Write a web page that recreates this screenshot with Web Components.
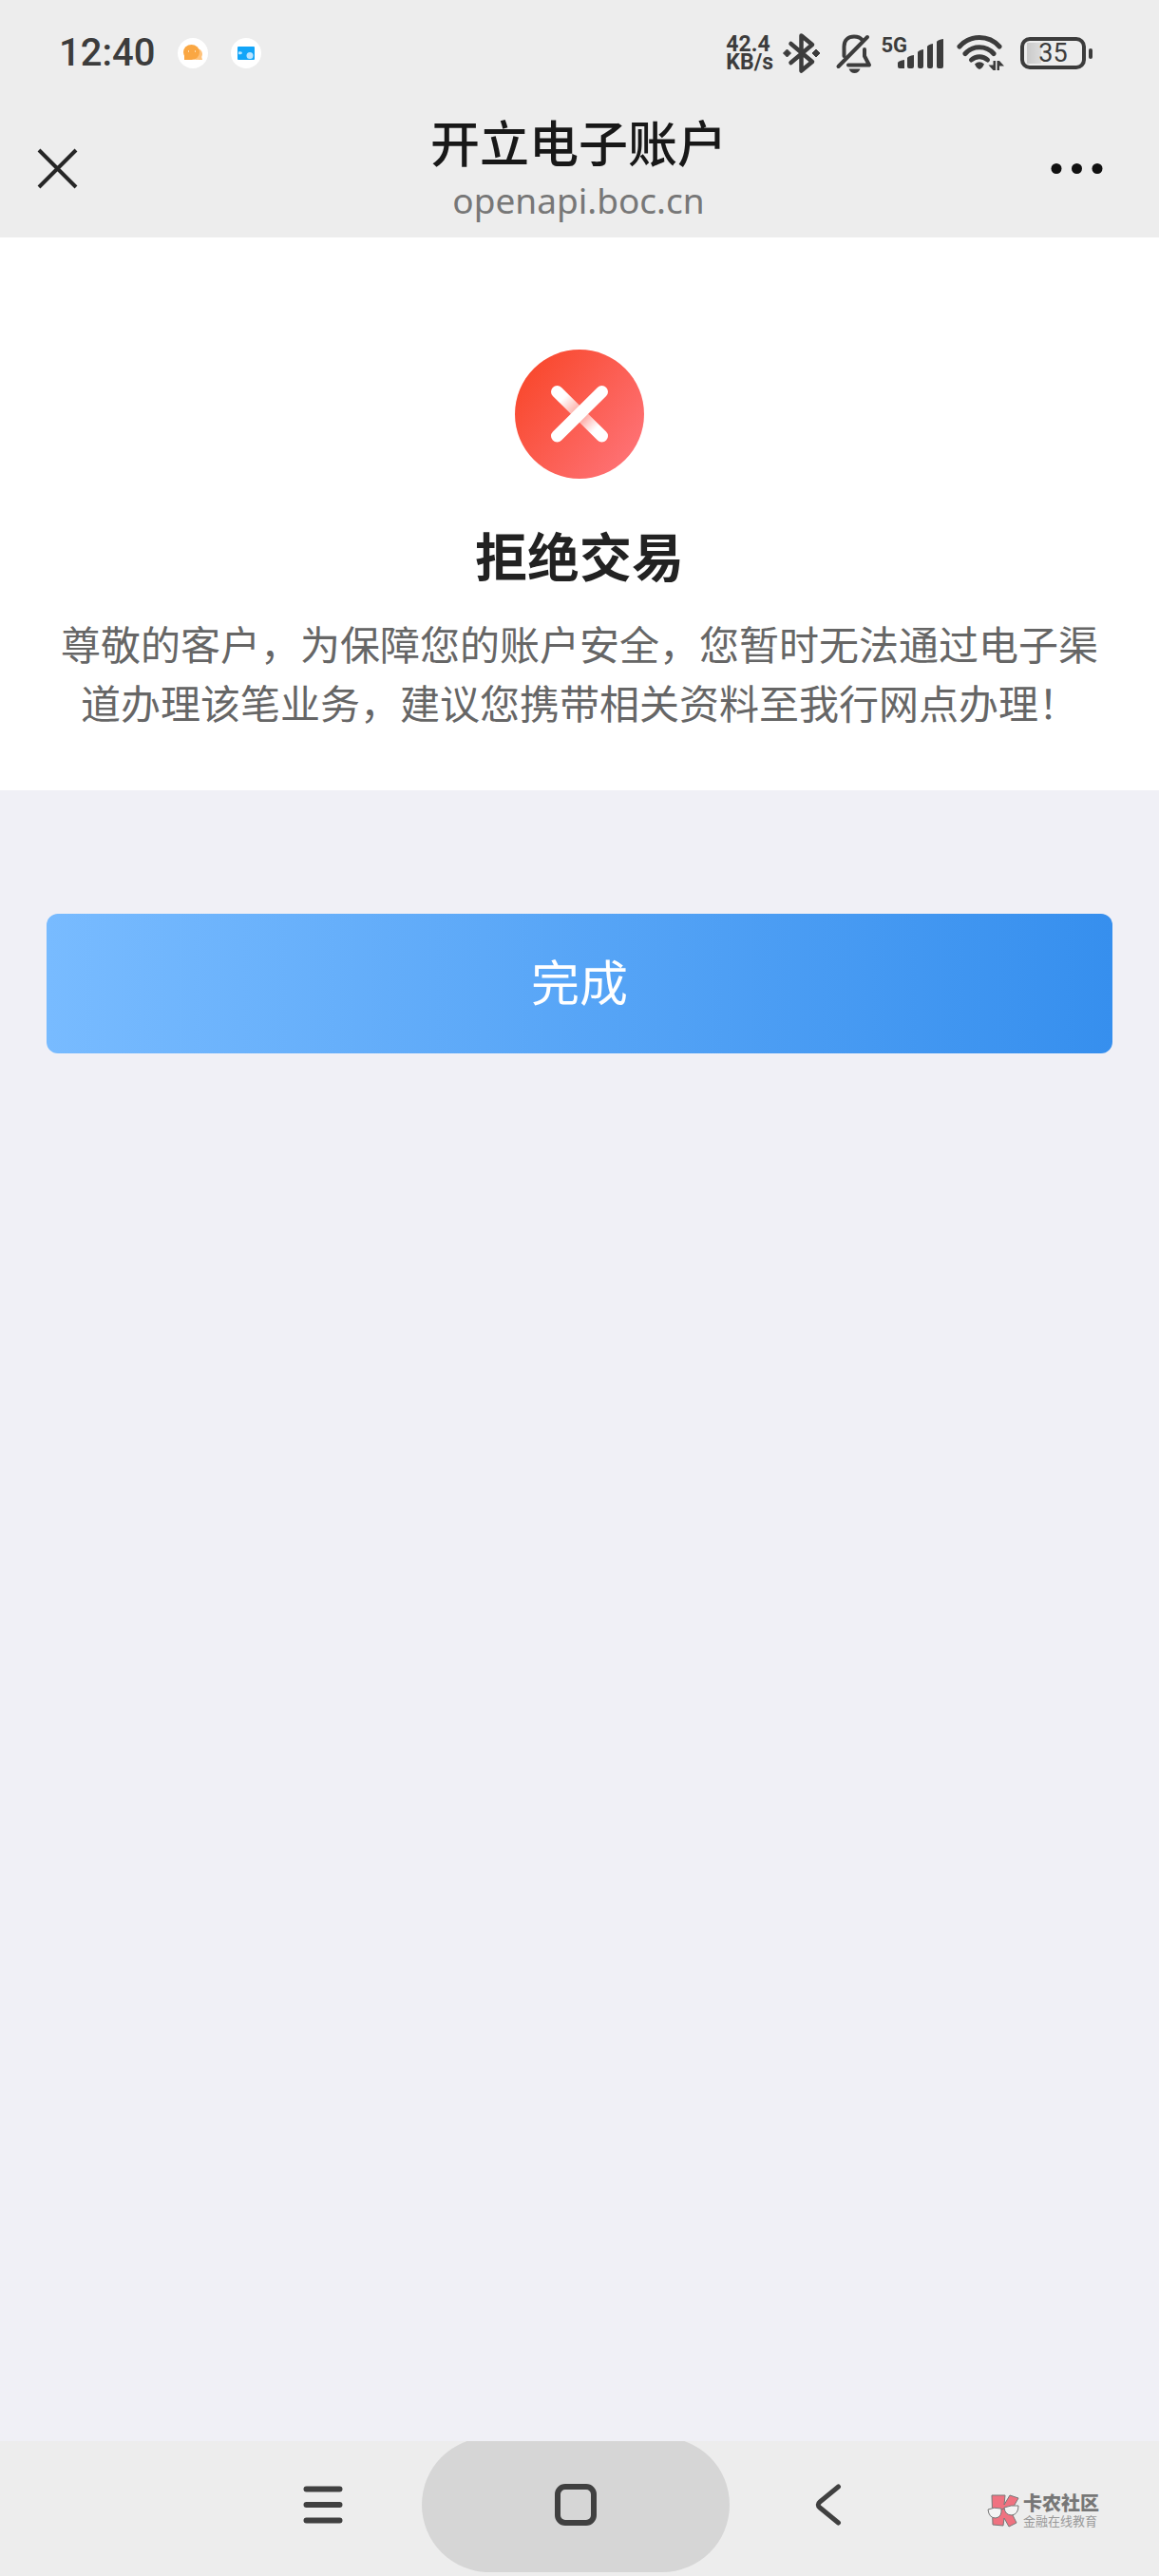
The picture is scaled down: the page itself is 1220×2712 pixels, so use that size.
<!DOCTYPE html>
<html lang="zh-CN">
<head>
<meta charset="utf-8">
<meta name="viewport" content="width=device-width, initial-scale=1">
<title>开立电子账户</title>
<style>
  body {
    margin: 0;
    background: #f0f0f6;
    font-family: "Noto Sans CJK SC", sans-serif;
  }
</style>
</head>
<body>
<account-page>
  <status-bar slot="top" time="12:40" speed="42.4" unit="KB/s" network="5G" battery="35"></status-bar>
  <title-bar slot="top">
    开立电子账户
    <span slot="host">openapi.boc.cn</span>
  </title-bar>
  <result-panel>
    <span slot="title">拒绝交易</span>
    尊敬的客户，为保障您的账户安全，您暂时无法通过电子渠道办理该笔业务，建议您携带相关资料至我行网点办理！
  </result-panel>
  <primary-button>完成</primary-button>
  <system-nav slot="bottom">
    <brand-mark>
      卡农社区
      <span slot="tagline">金融在线教育</span>
    </brand-mark>
  </system-nav>
</account-page>

<script>
class AccountPage extends HTMLElement {
  constructor() {
    super();
    this.attachShadow({ mode: "open" });
    this.shadowRoot.innerHTML = `
      <style>
        :host {
          display: flex;
          flex-direction: column;
          min-height: 100vh;
        }

        header {
          background: #ededed;
        }

        main {
          flex: 1;
        }
      </style>
      <header><slot name="top"></slot></header>
      <main><slot></slot></main>
      <slot name="bottom"></slot>
    `;
  }
}

class StatusBar extends HTMLElement {
  constructor() {
    super();
    this.attachShadow({ mode: "open" });
  }

  connectedCallback() {
    this.shadowRoot.innerHTML = `
      <style>
        :host {
          display: flex;
          align-items: center;
          justify-content: space-between;
          height: 112px;
          padding: 0 70px 0 62px;
          color: #3c3c3c;
          font-family: Roboto, sans-serif;
        }

        .side {
          display: flex;
          align-items: center;
        }

        svg {
          display: block;
        }

        .time {
          margin-right: 24px;
          font-size: 40px;
          line-height: 48px;
          font-weight: 500;
        }

        .app {
          margin-right: 24px;
        }

        .speed {
          display: flex;
          flex-direction: column;
          margin-right: 10px;
          font-size: 23px;
          line-height: 19px;
          font-weight: 700;
        }

        .signal {
          position: relative;
          margin: 0 13px 0 26px;
        }

        .network {
          position: absolute;
          right: 38px;
          top: -4px;
          font-size: 22px;
          line-height: 22px;
          font-weight: 700;
        }

        .bell {
          margin-left: 15px;
        }

        .battery {
          display: flex;
          align-items: center;
          gap: 3px;
          margin-left: 16px;
        }

        .cell {
          box-sizing: border-box;
          width: 69px;
          height: 34px;
          border: 4px solid #3c3c3c;
          border-radius: 10px;
          padding: 2px;
          font-size: 27px;
          line-height: 22px;
          text-align: center;
          background: linear-gradient(90deg, #cacaca, #dcdcdc) 3px 2px / 15px 22px no-repeat;
        }

        .tip {
          width: 4px;
          height: 11px;
          border-radius: 2px;
          background: #3c3c3c;
        }
      </style>
      <div class="side">
        <span class="time">${this.getAttribute("time")}</span>
        <svg class="app" width="32" height="32" viewBox="0 0 32 32">
          <circle cx="16" cy="16" r="16" fill="#fff"/>
          <ellipse cx="20" cy="17" rx="6" ry="6" fill="#ffc27a"/>
          <path d="M21 23 h5 l-1 -4z" fill="#ffc27a"/>
          <ellipse cx="14.500" cy="15" rx="8.500" ry="8" fill="#faa743"/>
          <path d="M7 23 V18 L15 23z" fill="#faa743"/>
          <path d="M11 14h1M18 14h1" stroke="#ffd9a6" stroke-width="2"/>
        </svg>
        <svg class="app" width="32" height="32" viewBox="0 0 32 32">
          <circle cx="16" cy="16" r="16" fill="#fff"/>
          <rect x="7" y="9" width="18" height="14" rx="1" fill="#12a5f8"/>
          <circle cx="20" cy="18.500" r="3.500" fill="#b9e4ff"/>
          <path d="M8 14.500 q4 -1 4 1.500 q-1 2 -4 1z" fill="#b9e4ff"/>
        </svg>
      </div>
      <div class="side">
        <div class="speed">
          <span>${this.getAttribute("speed")}</span>
          <span>${this.getAttribute("unit")}</span>
        </div>
        <svg width="40" height="44" viewBox="0 0 40 44" role="img" aria-label="蓝牙">
          <path d="M8.500 12 L31 31 L19.500 40.500 V3.500 L31 13 L8.500 32" fill="none" stroke="#3c3c3c" stroke-width="4.500" stroke-linecap="round" stroke-linejoin="round"/>
          <path d="M4.500 18 l4 4 l-4 4 l-4 -4z M35 18 l4 4 l-4 4 l-4 -4z" fill="#3c3c3c" stroke="#3c3c3c" stroke-linejoin="round"/>
        </svg>
        <svg class="bell" width="40" height="43" viewBox="0 0 40 43" role="img" aria-label="静音">
          <g fill="none" stroke="#3c3c3c" stroke-width="4" stroke-linecap="round" stroke-linejoin="round">
            <path d="M9.500 24 V14 C9.500 7 14 3.500 20 3.500 C24 3.500 27 5 28.500 7"/>
            <path d="M3.500 35 L34 4"/>
            <path d="M31 17 V24 L36 33.500 H14"/>
          </g>
          <path d="M14.500 37.500 h12 q-2 4.500 -6 4.500 t-6 -4.500z" fill="#3c3c3c"/>
        </svg>
        <div class="signal">
          <span class="network">${this.getAttribute("network")}</span>
          <svg width="48" height="31" viewBox="0 0 48 31" role="img" aria-label="信号">
            <path d="M0 25 q1 -2 7 -3 v9 h-5 q-2 0 -2 -2z M10 20 q1 -2 7 -3 v12 q0 2 -2 2 h-3 q-2 0 -2 -2z M21 14 q1 -2 6 -3 v18 q0 2 -2 2 h-2 q-2 0 -2 -2z M31 8 q1 -2 6 -3 v24 q0 2 -2 2 h-2 q-2 0 -2 -2z M41 3 q1 -2 7 -3 v29 q0 2 -2 2 h-3 q-2 0 -2 -2z" fill="#3c3c3c"/>
          </svg>
        </div>
        <svg width="52" height="40" viewBox="0 0 52 40" role="img" aria-label="无线网络">
          <g fill="none" stroke="#3c3c3c" stroke-width="5" stroke-linecap="round">
            <path d="M4 13 A28 28 0 0 1 46 13"/>
            <path d="M10 20.500 A20 20 0 0 1 40 20.500"/>
            <path d="M16.500 27 A12.500 12.500 0 0 1 33.500 27"/>
          </g>
          <path d="M20 31.500 Q25 27 30 31.500 Q28 36 25 37 Q22 36 20 31.500z" fill="#3c3c3c"/>
          <path d="M39.500 28 h2.500 v10 h-2.500 l-5 -5.500 h5z M46 38 h-2.500 v-10 h2.500 l5 5.500 h-5z" fill="#3c3c3c"/>
        </svg>
        <div class="battery">
          <div class="cell">${this.getAttribute("battery")}</div>
          <div class="tip"></div>
        </div>
      </div>
    `;
  }
}

class TitleBar extends HTMLElement {
  constructor() {
    super();
    this.attachShadow({ mode: "open" });
    this.shadowRoot.innerHTML = `
      <style>
        :host {
          display: grid;
          grid-template-columns: 1fr auto 1fr;
          align-items: center;
          height: 130px;
          padding: 0 58px 8px 38px;
          color: #181818;
        }

        button {
          display: block;
          margin: 0;
          padding: 0;
          border: none;
          background: none;
          cursor: pointer;
        }

        svg {
          display: block;
        }

        .more {
          justify-self: end;
        }

        .text {
          display: flex;
          flex-direction: column;
          gap: 6px;
          padding-left: 18px;
          text-align: center;
        }

        h1 {
          margin: 0;
          font-size: 52px;
          line-height: 62px;
          font-weight: 500;
        }

        .host {
          color: #777;
          font-family: "Noto Sans", sans-serif;
          font-size: 37px;
          line-height: 50px;
        }
      </style>
      <button aria-label="关闭">
        <svg width="45" height="45" viewBox="0 0 45 45">
          <path d="M3 3 L42 42 M42 3 L3 42" stroke="#262626" stroke-width="4"/>
        </svg>
      </button>
      <div class="text">
        <h1><slot></slot></h1>
        <div class="host"><slot name="host"></slot></div>
      </div>
      <button class="more" aria-label="更多">
        <svg width="58" height="45" viewBox="0 0 58 45">
          <g fill="#111">
            <circle cx="8" cy="22.500" r="5.500"/>
            <circle cx="29.500" cy="22.500" r="5.500"/>
            <circle cx="51" cy="22.500" r="5.500"/>
          </g>
        </svg>
      </button>
    `;
  }
}

class ResultPanel extends HTMLElement {
  constructor() {
    super();
    this.attachShadow({ mode: "open" });
    this.shadowRoot.innerHTML = `
      <style>
        :host {
          display: flex;
          flex-direction: column;
          align-items: center;
          padding: 118px 49px 62px;
          background: #fff;
          text-align: center;
        }

        h2 {
          margin: 40px 0 24px;
          color: #222;
          font-size: 55px;
          line-height: 78px;
          font-weight: 700;
        }

        p {
          margin: 0;
          color: #666;
          font-size: 42px;
          line-height: 62px;
        }
      </style>
      <svg width="136" height="136" viewBox="0 0 136 136" aria-hidden="true">
        <defs>
          <linearGradient id="disc" x1="0.100" y1="0.200" x2="0.900" y2="0.800">
            <stop offset="0" stop-color="#f94a30"/>
            <stop offset="1" stop-color="#fe7072"/>
          </linearGradient>
          <linearGradient id="bar" gradientUnits="userSpaceOnUse" x1="44" y1="44" x2="92" y2="91">
            <stop offset="0.150" stop-color="#fff"/>
            <stop offset="0.450" stop-color="#fff" stop-opacity="0.500"/>
            <stop offset="0.600" stop-color="#fff" stop-opacity="0.500"/>
            <stop offset="0.850" stop-color="#fff"/>
          </linearGradient>
        </defs>
        <circle cx="68" cy="68" r="68" fill="url(#disc)"/>
        <path d="M44.500 44.500 L91.500 91" stroke="url(#bar)" stroke-width="13" stroke-linecap="round"/>
        <path d="M91.500 44.500 L44.500 91" stroke="#fff" stroke-width="13" stroke-linecap="round"/>
      </svg>
      <h2><slot name="title"></slot></h2>
      <p><slot></slot></p>
    `;
  }
}

class PrimaryButton extends HTMLElement {
  constructor() {
    super();
    this.attachShadow({ mode: "open" });
    this.shadowRoot.innerHTML = `
      <style>
        :host {
          display: block;
          padding: 130px 49px;
        }

        button {
          display: block;
          width: 100%;
          height: 147px;
          padding: 0 0 8px;
          border: none;
          border-radius: 12px;
          background: linear-gradient(90deg, #78bbff, #368fee);
          color: #fff;
          font-family: inherit;
          font-size: 51px;
          line-height: 72px;
          cursor: pointer;
        }
      </style>
      <button><slot></slot></button>
    `;
  }
}

class SystemNav extends HTMLElement {
  constructor() {
    super();
    this.attachShadow({ mode: "open" });
    this.shadowRoot.innerHTML = `
      <style>
        :host {
          position: relative;
          display: flex;
          align-items: center;
          justify-content: center;
          height: 134px;
          padding: 0 8px 8px 0;
          background: #ededed;
          overflow: hidden;
        }

        button {
          display: flex;
          align-items: center;
          justify-content: center;
          flex-shrink: 0;
          width: 208px;
          height: 142px;
          padding: 0;
          border: none;
          border-radius: 71px;
          background: none;
        }

        .home {
          width: 324px;
          background: #d6d6d6;
        }

        /* floats over the bar's free right end */
        ::slotted(brand-mark) {
          position: absolute;
          right: 63px;
          top: 53px;
        }
      </style>
      <button aria-label="最近任务">
        <svg width="44" height="44" viewBox="0 0 44 44">
          <path d="M4.500 5.500 H39.500 M4.500 22 H39.500 M4.500 38.500 H39.500" stroke="#404040" stroke-width="6" stroke-linecap="round"/>
        </svg>
      </button>
      <button class="home" aria-label="主屏幕">
        <svg width="44" height="44" viewBox="0 0 44 44">
          <rect x="3" y="3" width="38" height="38" rx="8" fill="none" stroke="#404040" stroke-width="6"/>
        </svg>
      </button>
      <button aria-label="返回">
        <svg width="28" height="44" viewBox="0 0 28 44">
          <path d="M24.500 3 L5 19 Q1.500 22 5 25 L24.500 41" fill="none" stroke="#404040" stroke-width="5" stroke-linecap="round"/>
        </svg>
      </button>
      <slot></slot>
    `;
  }
}

class BrandMark extends HTMLElement {
  constructor() {
    super();
    this.attachShadow({ mode: "open" });
    this.shadowRoot.innerHTML = `
      <style>
        :host {
          display: flex;
          align-items: center;
          gap: 2px;
          color: #777;
        }

        .name {
          font-size: 20px;
          line-height: 22px;
          font-weight: 900;
        }

        .tagline {
          color: #999;
          font-size: 13px;
          line-height: 16px;
        }
      </style>
      <svg width="38" height="40" viewBox="0 0 38 40" aria-hidden="true">
        <g stroke="#777" stroke-linejoin="round">
          <path d="M7 4 L21 4 L20 14 L26 4 L35 7 L27 21 L33 33 L25 37 L20 28 L19 36 L8 35z" fill="#ef7280"/>
          <path d="M3 19 Q9 16 17 18 Q18 27 11 28 Q4 28 3 19z M20 17 Q27 14 35 15 Q35 24 28 25 Q21 25 20 17z" fill="#f4f4f4"/>
          <path d="M17 19 L20 18" fill="none"/>
        </g>
      </svg>
      <div>
        <div class="name"><slot></slot></div>
        <div class="tagline"><slot name="tagline"></slot></div>
      </div>
    `;
  }
}

customElements.define("account-page", AccountPage);
customElements.define("status-bar", StatusBar);
customElements.define("title-bar", TitleBar);
customElements.define("result-panel", ResultPanel);
customElements.define("primary-button", PrimaryButton);
customElements.define("system-nav", SystemNav);
customElements.define("brand-mark", BrandMark);
</script>
</body>
</html>
